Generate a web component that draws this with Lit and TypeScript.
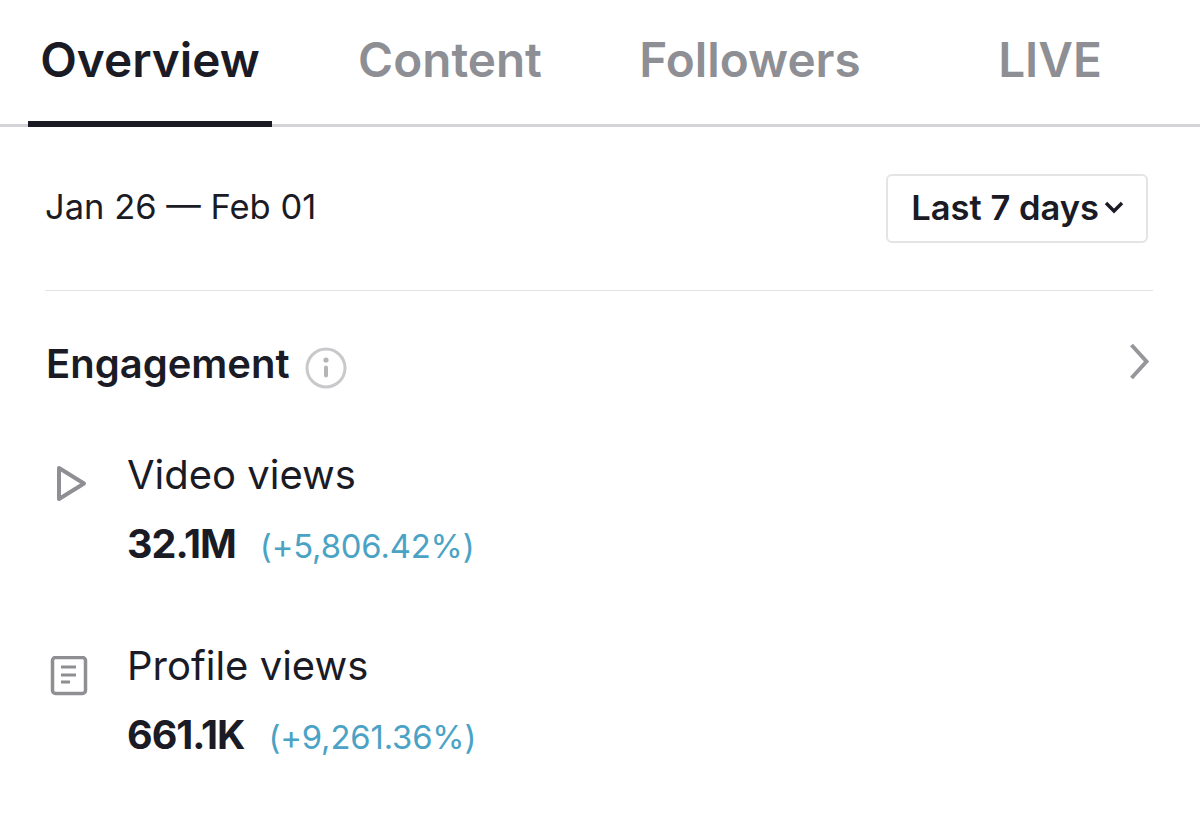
import { LitElement, html, css } from 'lit';
import { customElement } from 'lit/decorators.js';

const tabs = ['Overview', 'Content', 'Followers', 'LIVE'];

@customElement('app-root')
export class AppRoot extends LitElement {
  static styles = css`
    :host {
      display: block;
      width: 1200px;
      height: 821px;
      overflow: hidden;
      background: #fff;
      color: #1a1b25;
      font-family: 'Inter', 'Lato', sans-serif;
    }

    .tabs {
      display: grid;
      grid-template-columns: repeat(4, 300px);
      height: 124px;
      border-bottom: 3px solid #d3d3d8;
      box-sizing: content-box;
    }

    .tab {
      display: flex;
      justify-content: center;
    }

    .tab span {
      height: 121px;
      padding: 31px 12px 0;
      box-sizing: border-box;
      font-size: 47.7px;
      line-height: 58px;
      font-weight: 600;
      color: #8e8f95;
    }

    .tab.active span {
      color: #1a1b25;
      height: 127px;
      border-bottom: 6px solid #1a1b25;
    }

    .date-row {
      display: flex;
      justify-content: space-between;
      align-items: center;
      margin: 46px 52px 0 45px;
      height: 70px;
    }

    .dates {
      font-size: 34.5px;
      margin-top: -4px;
    }

    .range {
      display: flex;
      align-items: center;
      gap: 5px;
      height: 69px;
      padding: 0 22px 2px 23px;
      box-sizing: border-box;
      border: 2px solid #e4e4e7;
      border-radius: 6px;
      font-size: 34.5px;
      font-weight: 600;
    }

    .rule {
      height: 1px;
      margin: 47px 47px 0 45px;
      background: #e3e3e6;
    }

    .section-head {
      display: flex;
      align-items: center;
      margin: 44px 46px 0 46px;
      height: 56px;
    }

    .section-head h2 {
      margin: 0;
      font-size: 40px;
      font-weight: 600;
    }

    .section-head .info {
      margin-left: 15px;
      margin-top: 10px;
    }

    .section-head .more {
      margin-left: auto;
      margin-top: -2px;
    }

    .metric {
      display: grid;
      grid-template-columns: 81px 1fr;
      margin-left: 46px;
      height: 191px;
    }

    .metrics {
      margin-top: 56px;
    }

    .metric .icon {
      display: flex;
      padding-left: 4px;
      padding-top: 18px;
    }

    .label {
      font-size: 40px;
      line-height: 56px;
    }

    .values {
      display: flex;
      align-items: baseline;
      margin-top: 16px;
    }

    .value {
      font-size: 39.5px;
      line-height: 50px;
      font-weight: 700;
      letter-spacing: -1px;
    }

    .delta {
      margin-left: 24px;
      font-size: 32.8px;
      letter-spacing: -0.15px;
      color: #4aa3c5;
    }
  `;

  render() {
    return html`
      <div class="tabs">
        ${tabs.map(
          (t, i) => html`<div class="tab ${i === 0 ? 'active' : ''}"><span>${t}</span></div>`
        )}
      </div>

      <div class="date-row">
        <div class="dates">Jan 26 — Feb 01</div>
        <div class="range">
          Last 7 days
          <svg width="20" height="14" viewBox="0 0 20 14" fill="none" stroke="#1a1b25" stroke-width="3.4">
            <path d="M2 3l8 8 8-8" />
          </svg>
        </div>
      </div>

      <div class="rule"></div>

      <div class="section-head">
        <h2>Engagement</h2>
        <svg class="info" width="42" height="42" viewBox="0 0 42 42" fill="none">
          <circle cx="21" cy="21" r="19" stroke="#c9c9cc" stroke-width="3" />
          <circle cx="21" cy="13" r="2.6" fill="#b5b5b8" />
          <rect x="19" y="18.5" width="4" height="12" rx="2" fill="#b5b5b8" />
        </svg>
        <svg class="more" width="26" height="38" viewBox="0 0 26 38" fill="none" stroke="#97979b" stroke-width="4">
          <path d="M3.5 2l15 16.5L3.5 35" />
        </svg>
      </div>

      <div class="metrics">
        <div class="metric">
          <div class="icon">
            <svg width="38" height="38" viewBox="0 0 38 38" fill="none" stroke="#8f8f93" stroke-width="4" stroke-linejoin="round">
              <path d="M9 3l25 15.5L9 34z" />
            </svg>
          </div>
          <div>
            <div class="label">Video views</div>
            <div class="values">
              <span class="value">32.1M</span>
              <span class="delta">(+5,806.42%)</span>
            </div>
          </div>
        </div>
        <div class="metric">
          <div class="icon">
            <svg width="38" height="40" viewBox="0 0 38 40" fill="none" stroke="#8f8f93" stroke-width="3">
              <rect x="2.5" y="1.5" width="33" height="36" rx="3" stroke-width="3.5" />
              <path d="M11 11h15M11 19h15M11 26h9" />
            </svg>
          </div>
          <div>
            <div class="label">Profile views</div>
            <div class="values">
              <span class="value">661.1K</span>
              <span class="delta">(+9,261.36%)</span>
            </div>
          </div>
        </div>
      </div>
    `;
  }
}
